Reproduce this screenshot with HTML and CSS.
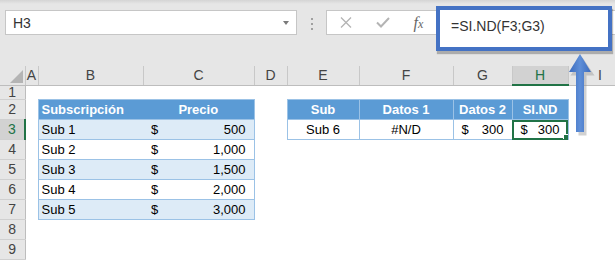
FILE: index.html
```html
<!DOCTYPE html>
<html>

<head>
    <title>SI.ND</title>
    <meta charset="UTF-8">
    <link rel="stylesheet" href="styles.css">
</head>

<body>
    <div class="app">
        <div class="toolbar">
            <div class="namebox">
                <span>H3</span>
                <span class="caret"></span>
            </div>
            <div class="grip"><i></i><i></i><i></i></div>
            <div class="formula">
                <span class="fbtn">
                    <svg width="12" height="11" viewBox="0 0 12 11">
                        <path d="M1 0.5 L11 10.5 M11 0.5 L1 10.5" stroke="#b4b4b4" stroke-width="1.3" fill="none" />
                    </svg>
                </span>
                <span class="fbtn">
                    <svg width="14" height="11" viewBox="0 0 14 11">
                        <path d="M1 5.5 L5 9.5 L13 1" stroke="#b4b4b4" stroke-width="2" fill="none" />
                    </svg>
                </span>
                <span class="fbtn fx"><i>f</i><i class="x">x</i></span>
                <div class="formula-input">=SI.ND(F3;G3)</div>
            </div>
        </div>

        <table class="sheet">
            <colgroup>
                <col class="c-rh">
                <col class="c-a">
                <col class="c-b">
                <col class="c-c">
                <col class="c-d">
                <col class="c-e">
                <col class="c-f">
                <col class="c-g">
                <col class="c-h">
                <col class="c-i">
            </colgroup>
            <tr class="colhead">
                <th class="corner"><span class="tri"></span></th>
                <th>A</th>
                <th>B</th>
                <th>C</th>
                <th>D</th>
                <th>E</th>
                <th>F</th>
                <th>G</th>
                <th class="sel">H</th>
                <th>I</th>
            </tr>
            <tr class="r1">
                <th class="rh">1</th>
                <td></td><td></td><td></td><td></td><td></td><td></td><td></td><td></td><td></td>
            </tr>
            <tr>
                <th class="rh">2</th>
                <td></td>
                <td class="t1 hd first">Subscripción</td>
                <td class="t1 hd last center">Precio</td>
                <td></td>
                <td class="t2 hd center">Sub</td>
                <td class="t2 hd center">Datos 1</td>
                <td class="t2 hd center">Datos 2</td>
                <td class="t2 hd center">SI.ND</td>
                <td></td>
            </tr>
            <tr>
                <th class="rh sel">3</th>
                <td></td>
                <td class="t1 band first">Sub 1</td>
                <td class="t1 band last"><div class="acct"><span>$</span><span>500</span></div></td>
                <td></td>
                <td class="t2 center">Sub 6</td>
                <td class="t2 center">#N/D</td>
                <td class="t2"><div class="acct"><span>$</span><span>300</span></div></td>
                <td class="t2 active"><div class="acct"><span>$</span><span>300</span></div><span class="handle"></span></td>
                <td></td>
            </tr>
            <tr>
                <th class="rh">4</th>
                <td></td>
                <td class="t1 first">Sub 2</td>
                <td class="t1 last"><div class="acct"><span>$</span><span>1,000</span></div></td>
                <td></td><td></td><td></td><td></td><td></td><td></td>
            </tr>
            <tr>
                <th class="rh">5</th>
                <td></td>
                <td class="t1 band first">Sub 3</td>
                <td class="t1 band last"><div class="acct"><span>$</span><span>1,500</span></div></td>
                <td></td><td></td><td></td><td></td><td></td><td></td>
            </tr>
            <tr>
                <th class="rh">6</th>
                <td></td>
                <td class="t1 first">Sub 4</td>
                <td class="t1 last"><div class="acct"><span>$</span><span>2,000</span></div></td>
                <td></td><td></td><td></td><td></td><td></td><td></td>
            </tr>
            <tr>
                <th class="rh">7</th>
                <td></td>
                <td class="t1 band first">Sub 5</td>
                <td class="t1 band last"><div class="acct"><span>$</span><span>3,000</span></div></td>
                <td></td><td></td><td></td><td></td><td></td><td></td>
            </tr>
            <tr>
                <th class="rh">8</th>
                <td></td><td></td><td></td><td></td><td></td><td></td><td></td><td></td><td></td>
            </tr>
            <tr>
                <th class="rh">9</th>
                <td></td><td></td><td></td><td></td><td></td><td></td><td></td><td></td><td></td>
            </tr>
        </table>

        <!-- callout arrow from H3 up to the formula -->
        <svg class="arrow" width="30" height="86" viewBox="0 0 30 86">
            <defs>
                <linearGradient id="ag" x1="0" x2="1" y1="0" y2="0">
                    <stop offset="0" stop-color="#3c6bbd" />
                    <stop offset="0.5" stop-color="#5f8fd8" />
                    <stop offset="1" stop-color="#3c6bbd" />
                </linearGradient>
            </defs>
            <path d="M14 4 L26 22 L18 22 L18 82 L10 82 L10 22 L2 22 Z" fill="#9a9a9a" opacity="0.45" transform="translate(1.5 1.5)" />
            <path d="M13 2 L24 20 L17 20 L17 80 L9 80 L9 20 L2 20 Z" fill="url(#ag)" />
        </svg>
    </div>
</body>

</html>
```

FILE: styles.css
```css
body {
    margin: 0;
    padding: 0;
    background: #ffffff;
    font-family: "Liberation Sans", Arial, sans-serif;
    font-size: 13px;
    color: #000000;
}

.app {
    position: relative;
    width: 615px;
    height: 260px;
    overflow: hidden;
}

/* formula bar */

.toolbar {
    display: flex;
    align-items: flex-start;
    height: 66px;
    box-sizing: border-box;
    padding: 10px 0 0 5px;
    background: linear-gradient(#d4d4d4, #e6e6e6 4px);
}

.namebox {
    display: flex;
    align-items: center;
    justify-content: space-between;
    width: 292px;
    height: 25px;
    box-sizing: border-box;
    padding: 0 7px 0 7px;
    background: #ffffff;
    border: 1px solid #c6c6c6;
    font-size: 14px;
    color: #333;
}

.caret {
    width: 0;
    height: 0;
    border-left: 3px solid transparent;
    border-right: 3px solid transparent;
    border-top: 4px solid #7a7a7a;
}

.grip {
    display: flex;
    flex-direction: column;
    gap: 3px;
    margin: 8px 0 0 14px;
}

.grip i {
    display: block;
    width: 2px;
    height: 2px;
    background: #a0a0a0;
}

.formula {
    display: flex;
    align-items: flex-start;
    flex: 1;
    height: 25px;
    margin-left: 13px;
    box-sizing: border-box;
    background: #ffffff;
    border: 1px solid #c6c6c6;
    border-right: none;
}

.fbtn {
    display: flex;
    align-items: center;
    justify-content: center;
    width: 37px;
    height: 23px;
}

.fx {
    width: 35px;
    font-family: "Liberation Serif", serif;
    font-style: italic;
    font-size: 16px;
    color: #666;
}

.fx .x {
    font-size: 12px;
    margin-top: 4px;
}

.formula-input {
    width: 176px;
    height: 45px;
    margin-top: -5px;
    box-sizing: border-box;
    padding: 8px 0 0 11px;
    background: #ffffff;
    border: 4px solid #4472c4;
    box-shadow: 1px 3px 1px rgba(0, 0, 0, 0.25);
    font-size: 14px;
    color: #333;
}

/* grid */

.sheet {
    width: 632px;
    table-layout: fixed;
    border-collapse: collapse;
}

.c-rh { width: 25px; }
.c-a { width: 13px; }
.c-b { width: 105px; }
.c-c { width: 111px; }
.c-d { width: 33px; }
.c-e { width: 72px; }
.c-f { width: 94px; }
.c-g { width: 59px; }
.c-h { width: 56px; }
.c-i { width: 64px; }

.sheet td,
.sheet th {
    height: 19px;
    padding: 0 3px;
    line-height: 19px;
    white-space: nowrap;
    overflow: hidden;
    font-weight: normal;
    text-align: left;
}

.sheet .colhead th {
    height: 18px;
    padding: 0;
    line-height: 18px;
    background: #e6e6e6;
    color: #444;
    text-align: center;
    font-size: 14px;
    border-right: 1px solid #c8c8c8;
    border-bottom: 1px solid #bdbdbd;
}

.sheet .colhead th.sel {
    background: #d2d2d2;
    color: #217346;
    border-bottom: 2px solid #217346;
}

.corner {
    position: relative;
}

.tri {
    position: absolute;
    right: 2px;
    bottom: 2px;
    width: 0;
    height: 0;
    border-left: 13px solid transparent;
    border-bottom: 13px solid #b4b4b4;
}

.sheet th.rh {
    padding: 0;
    background: #e6e6e6;
    color: #444;
    text-align: center;
    font-size: 14px;
    border-right: 1px solid #bdbdbd;
    border-bottom: 1px solid #d0d0d0;
}

.sheet th.rh.sel {
    background: #d2d2d2;
    color: #217346;
    border-right: 2px solid #217346;
}

.sheet .r1 td,
.sheet .r1 th.rh {
    height: 13px;
    line-height: 13px;
    vertical-align: bottom;
}

/* excel tables */

.t1 {
    border-top: 1px solid #9bc2e6;
    border-bottom: 1px solid #9bc2e6;
}

.t1.first {
    border-left: 1px solid #9bc2e6;
}

.t1.last {
    border-right: 1px solid #9bc2e6;
}

.t2 {
    border: 1px solid #9bc2e6;
}

.sheet td.hd {
    background: #5b9bd5;
    color: #ffffff;
    font-weight: bold;
}

.band {
    background: #ddebf7;
}

.sheet td.center {
    text-align: center;
}

.acct {
    display: flex;
    justify-content: space-between;
    padding: 0 5px;
}

.active {
    position: relative;
    outline: 2px solid #217346;
    outline-offset: -2px;
}

.handle {
    position: absolute;
    right: -1px;
    bottom: -1px;
    width: 5px;
    height: 5px;
    background: #217346;
    border-left: 1px solid #ffffff;
    border-top: 1px solid #ffffff;
}

.arrow {
    position: absolute;
    left: 567px;
    top: 52px;
}
```
